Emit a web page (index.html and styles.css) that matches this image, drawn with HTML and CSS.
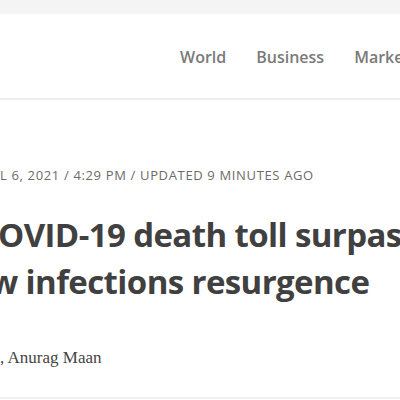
FILE: index.html
```html
<!DOCTYPE html>
<html lang="en">
<head>
<meta charset="utf-8">
<title>Reuters article</title>
<link rel="stylesheet" href="styles.css">
</head>
<body>
<div class="topbar"></div>
<header class="site-header">
  <nav class="nav">
    <a class="nav-link" href="#">World</a>
    <a class="nav-link" href="#">Business</a>
    <a class="nav-link" href="#">Markets</a>
  </nav>
</header>
<main class="article">
  <p class="dateline">L 6, 2021 / 4:29 PM / UPDATED 9 MINUTES AGO</p>
  <h1 class="headline"><span class="line line-first">OVID-19 death toll surpasses</span><span class="line line-cut">w infections resurgence</span></h1>
  <p class="byline">, Anurag Maan</p>
</main>
</body>
</html>
```
FILE: styles.css
```css
html, body {
  margin: 0;
  padding: 0;
  background: #ffffff;
  overflow: hidden;
}
body {
  width: 400px;
  font-family: "Open Sans", "Noto Sans", sans-serif;
}
.topbar {
  height: 13px;
  background: #f4f4f4;
  border-bottom: 2px solid #f9f9f9;
}
.site-header {
  height: 83px;
  border-bottom: 2px solid #ececec;
  display: flex;
  align-items: center;
}
.nav {
  display: flex;
  gap: 30px;
  padding-left: 180px;
  white-space: nowrap;
}
.nav-link {
  color: #7a7a7a;
  font-size: 16px;
  font-weight: 600;
  text-decoration: none;
}
.article {
  padding: 66px 0 29px;
  border-bottom: 2px solid #f0f0f0;
  white-space: nowrap;
}
.dateline {
  margin: 0;
  font-size: 13px;
  line-height: 18px;
  letter-spacing: 0.65px;
  color: #6b6b6b;
}
.headline {
  margin: 27px 0 0;
  font-size: 33px;
  line-height: 47px;
  letter-spacing: -0.6px;
  font-weight: 700;
  color: #404040;
}
.line {
  display: block;
}
.line-first {
  text-indent: -2px;
}
.line-cut {
  text-indent: -10px;
}
.byline {
  margin: 43px 0 0;
  font-family: "Liberation Serif", serif;
  font-size: 17px;
  line-height: 20px;
  color: #444444;
}
```
